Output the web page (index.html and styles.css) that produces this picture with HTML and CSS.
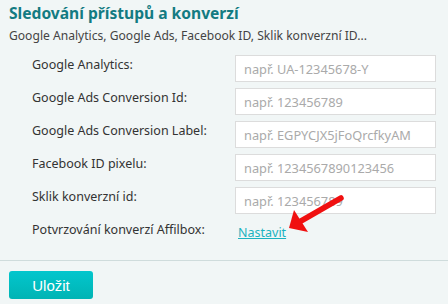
FILE: index.html
```html
<!DOCTYPE html>
<html lang="cs">
<head>
    <meta charset="UTF-8">
    <title>Sledování přístupů a konverzí</title>
    <link rel="stylesheet" href="styles.css">
</head>
<body>
    <div class="panel">
        <h3 class="panel-title">Sledování přístupů a konverzí</h3>
        <p class="panel-desc">Google Analytics, Google Ads, Facebook ID, Sklik konverzní ID...</p>

        <div class="form-rows">
            <label class="form-label" for="ga">Google Analytics:</label>
            <input class="form-input" id="ga" type="text" placeholder="např. UA-12345678-Y">

            <label class="form-label" for="adsId">Google Ads Conversion Id:</label>
            <input class="form-input" id="adsId" type="text" placeholder="např. 123456789">

            <label class="form-label" for="adsLabel">Google Ads Conversion Label:</label>
            <input class="form-input" id="adsLabel" type="text" placeholder="např. EGPYCJX5jFoQrcfkyAM">

            <label class="form-label" for="fb">Facebook ID pixelu:</label>
            <input class="form-input" id="fb" type="text" placeholder="např. 1234567890123456">

            <label class="form-label" for="sklik">Sklik konverzní id:</label>
            <input class="form-input" id="sklik" type="text" placeholder="např. 123456789">

            <span class="form-label">Potvrzování konverzí Affilbox:</span>
            <div class="link-cell">
                <a href="#" class="link">Nastavit</a>
                <svg class="arrow" width="70" height="50" viewBox="0 0 70 50">
                    <line x1="55" y1="13" x2="15" y2="36" stroke="#f01010" stroke-width="5.5" stroke-linecap="round"/>
                    <polygon points="3,43 8,25 22,47" fill="#f01010"/>
                </svg>
            </div>
        </div>
    </div>

    <div class="footer">
        <button class="btn-save">Uložit</button>
    </div>
</body>
</html>
```

FILE: styles.css
```css
body {
    margin: 0;
    background-color: #f1f6f6;
    font-family: "Noto Sans", sans-serif;
    color: #333;
}

.panel {
    padding: 3px 9px 0 9px;
}

.panel-title {
    margin: 0;
    font-size: 15.6px;
    font-weight: bold;
    color: #137b82;
    line-height: 20px;
}

.panel-desc {
    margin: 4px 0 0 0;
    font-size: 12.1px;
    line-height: 18px;
    color: #444;
}

.form-rows {
    display: grid;
    grid-template-columns: 203px 201px;
    grid-auto-rows: 27px;
    row-gap: 6px;
    margin: 10px 0 0 23px;
}

.form-label {
    font-size: 12.5px;
    color: #333;
    line-height: 20px;
}

.form-input {
    box-sizing: border-box;
    height: 27px;
    border: 1px solid #dcdcdc;
    background: #fff;
    padding: 0 8px;
    font-family: "Noto Sans", sans-serif;
    font-size: 12.8px;
    color: #333;
    outline: none;
}

.form-input::placeholder {
    color: #aaa;
}

.link-cell {
    position: relative;
    padding-left: 3px;
}

.link {
    font-size: 12.5px;
    line-height: 20px;
    color: #1bb3c0;
    text-decoration: underline;
}

.arrow {
    position: absolute;
    left: 51px;
    top: -35px;
}

.footer {
    margin-top: 13px;
    border-top: 1px solid #cfdcdc;
    padding: 10px 9px;
}

.btn-save {
    width: 84px;
    height: 28px;
    border: none;
    border-radius: 3px;
    background: linear-gradient(#03c6cd, #00b4b4);
    color: #fff;
    font-family: "Liberation Sans", Arial, sans-serif;
    font-size: 15px;
    cursor: pointer;
}
```
